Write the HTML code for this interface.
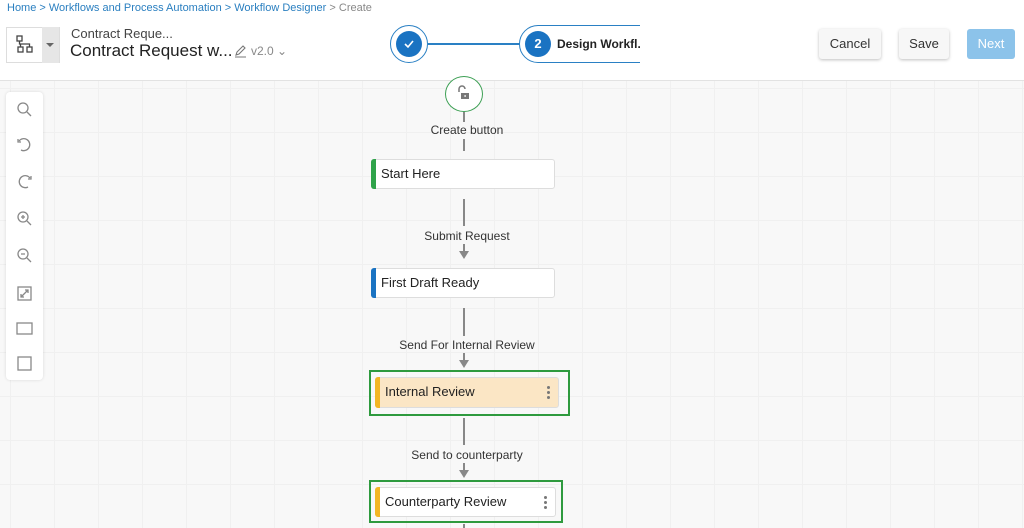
<!DOCTYPE html>
<html><head><style>
*{box-sizing:border-box;margin:0;padding:0}
body{width:1024px;height:528px;overflow:hidden;font-family:"Liberation Sans",sans-serif;position:relative;background:#f8f8f8;
background-image:linear-gradient(#f0f0f0 1px,transparent 1px),linear-gradient(90deg,#f0f0f0 1px,transparent 1px);background-size:44px 44px;background-position:10px 0}
.abs{position:absolute}
#hdr{left:0;top:0;width:1024px;height:81px;background:#fff;border-bottom:1px solid #e2e2e2}
.bc{font-size:11px;color:#2a7fc0;left:7px;top:2px}
.bc span{color:#888}
.btn{top:29px;height:30px;border-radius:3px;background:#f7f7f7;box-shadow:0 1px 3px rgba(0,0,0,.25);font-size:13px;color:#333;text-align:center;line-height:30px}
.node{left:371px;width:184px;height:30px;background:#fff;border:1px solid #ddd;border-radius:3px;font-size:13px;color:#222;line-height:28px;padding-left:9px}
.node::before{content:"";position:absolute;left:-1px;top:-1px;bottom:-1px;width:5px;border-radius:3px 0 0 3px;background:var(--c)}
.vl{width:2px;background:#888;left:463px}
.lbl{font-size:12px;color:#333;width:200px;left:367px;text-align:center}
.arr{left:459px;width:0;height:0;border-left:5px solid transparent;border-right:5px solid transparent;border-top:8px solid #888}
.out{border:2px solid #2e9a3e}
.dots{position:absolute;right:8px;top:8px;width:3px}
.dots i{display:block;width:3px;height:3px;border-radius:50%;background:#777;margin-bottom:2px}
.tb{left:6px;top:92px;width:37px;height:288px;background:#fff;border-radius:4px;box-shadow:0 0 3px rgba(0,0,0,.12)}
</style></head><body>
<div id="hdr" class="abs"></div>
<div class="abs bc">Home &gt; Workflows and Process Automation &gt; Workflow Designer <span>&gt; Create</span></div>
<div class="abs" style="left:6px;top:27px;width:54px;height:36px;border:1px solid #ddd;background:#fff"></div>
<div class="abs" style="left:42px;top:27px;width:17px;height:36px;background:#e6e6e6"></div>
<div class="abs" style="left:46px;top:43px;border-left:4px solid transparent;border-right:4px solid transparent;border-top:4px solid #666"></div>
<svg class="abs" style="left:15px;top:34px" width="20" height="20" viewBox="0 0 20 20" fill="none" stroke="#444" stroke-width="1.3"><rect x="2" y="2" width="5" height="5"/><rect x="3" y="13" width="5" height="5"/><rect x="12" y="13" width="5" height="5"/><path d="M4.5 7v3h10v3M5.5 10v3"/></svg>
<div class="abs" style="left:71px;top:26px;font-size:13px;color:#444">Contract Reque...</div>
<div class="abs" style="left:70px;top:41px;font-size:17px;color:#222">Contract Request w...</div>
<svg class="abs" style="left:234px;top:45px" width="13" height="13" viewBox="0 0 13 13" fill="none" stroke="#777" stroke-width="1.1"><path d="M2 10l1-3 6-6 2 2-6 6zM1 12h11"/></svg>
<div class="abs" style="left:251px;top:44px;font-size:12px;color:#888">v2.0 &#8964;</div>
<div class="abs" style="left:390px;top:25px;width:38px;height:38px;border-radius:50%;border:1px solid #2a80c4;background:#fff"></div>
<div class="abs" style="left:396px;top:31px;width:26px;height:26px;border-radius:50%;background:#1a73c2"></div>
<svg class="abs" style="left:402px;top:37px" width="14" height="14" viewBox="0 0 14 14" fill="none" stroke="#fff" stroke-width="1.6"><path d="M3 7l3 3 5-6"/></svg>
<div class="abs" style="left:428px;top:43px;width:92px;height:2px;background:#2a80c4"></div>
<div class="abs" style="left:519px;top:25px;width:140px;height:38px;border-radius:19px;border:1px solid #2a80c4;background:#fff"></div>
<div class="abs" style="left:525px;top:31px;width:26px;height:26px;border-radius:50%;background:#1a73c2;color:#fff;font-weight:bold;font-size:13px;text-align:center;line-height:26px">2</div>
<div class="abs" style="left:557px;top:37px;font-size:12px;font-weight:bold;color:#222">Design Workfl.</div>
<div class="abs" style="left:640px;top:20px;width:40px;height:50px;background:#fff"></div>
<div class="abs btn" style="left:819px;width:62px">Cancel</div>
<div class="abs btn" style="left:899px;width:50px">Save</div>
<div class="abs btn" style="left:967px;width:48px;background:#8cc3ea;color:#fff;box-shadow:none">Next</div>

<div class="abs tb"></div>
<svg class="abs" style="left:6px;top:92px" width="37" height="288" viewBox="0 0 37 288" fill="none" stroke="#888" stroke-width="1.3">
<circle cx="17" cy="16" r="5"/><path d="M21 20l4 4"/>
<path d="M13 49a6 6 0 1 1 2 9M12 47v3h3"/>
<path d="M24 86a6 6 0 1 0-2 9M25 84v3h-3"/>
<circle cx="17" cy="125" r="5"/><path d="M21 129l4 4M15 125h4M17 123v4"/>
<circle cx="17" cy="162" r="5"/><path d="M21 166l4 4M15 162h4"/>
<rect x="12" y="195" width="13" height="13"/><path d="M15 205l7-7M19 198h3v3M15 202v3h3"/>
<rect x="11" y="231" width="15" height="11"/>
<rect x="12" y="265" width="13" height="13"/>
</svg>

<div class="abs" style="left:445px;top:76px;width:38px;height:36px;border-radius:50%;border:1.5px solid #3ea055;background:#fff"></div>
<svg class="abs" style="left:455px;top:84px" width="18" height="18" viewBox="0 0 18 18"><path d="M4 8V5a3 3 0 0 1 6 0" fill="none" stroke="#777" stroke-width="1.5"/><rect x="6" y="9" width="8" height="6" fill="#777"/><rect x="9.5" y="11" width="1.2" height="2" fill="#fff"/></svg>
<div class="abs vl" style="top:112px;height:10px"></div>
<div class="abs lbl" style="top:123px">Create button</div>
<div class="abs vl" style="top:139px;height:12px"></div>
<div class="abs node" style="top:159px;--c:#2fa34a">Start Here</div>
<div class="abs vl" style="top:199px;height:27px"></div>
<div class="abs lbl" style="top:229px">Submit Request</div>
<div class="abs vl" style="top:244px;height:8px"></div><div class="abs arr" style="top:251px"></div>
<div class="abs node" style="top:268px;--c:#1a73c2">First Draft Ready</div>
<div class="abs vl" style="top:308px;height:28px"></div>
<div class="abs lbl" style="top:338px">Send For Internal Review</div>
<div class="abs vl" style="top:353px;height:8px"></div><div class="abs arr" style="top:360px"></div>
<div class="abs out" style="left:369px;top:370px;width:201px;height:46px"></div>
<div class="abs node" style="left:375px;top:377px;width:184px;height:31px;background:#fbe6c5;--c:#f3b624">Internal Review<div class="dots"><i></i><i></i><i></i></div></div>
<div class="abs vl" style="top:418px;height:27px"></div>
<div class="abs lbl" style="top:448px">Send to counterparty</div>
<div class="abs vl" style="top:463px;height:8px"></div><div class="abs arr" style="top:470px"></div>
<div class="abs out" style="left:369px;top:480px;width:194px;height:43px"></div>
<div class="abs node" style="left:375px;top:487px;width:181px;height:30px;--c:#f3b624">Counterparty Review<div class="dots"><i></i><i></i><i></i></div></div>
<div class="abs vl" style="top:524px;height:4px"></div>
</body></html>
